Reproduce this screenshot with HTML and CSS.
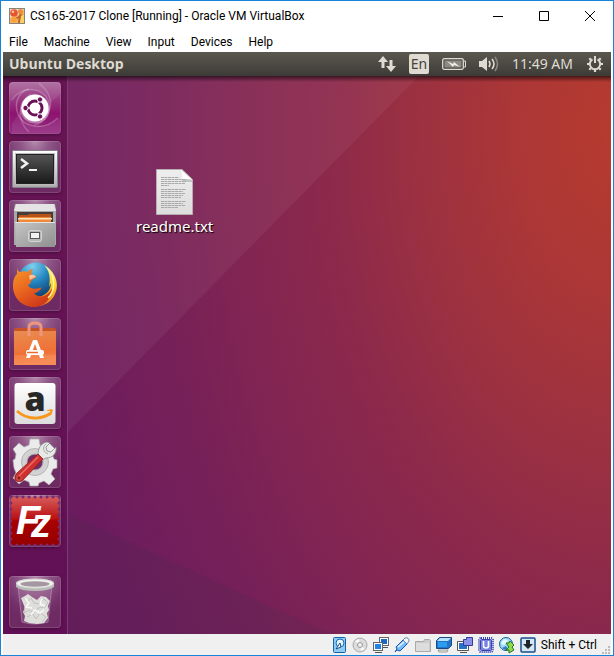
FILE: index.html
```html
<!DOCTYPE html>
<html lang="en">
<head>
<meta charset="utf-8">
<meta name="viewport" content="width=device-width, initial-scale=1">
<title>CS165-2017 Clone [Running] - Oracle VM VirtualBox</title>
<link rel="stylesheet" href="styles.css">
</head>
<body>
<div class="window">
  <header class="titlebar">
    <svg class="app-icon" viewBox="0 0 16 16" aria-hidden="true">
      <rect x=".5" y=".5" width="15" height="15" fill="#eadcc8" stroke="#8b8279"/>
      <path d="M1 10l8-3 6-6v9l-4 5H1z" fill="#f4b46a"/>
      <path d="M10 15c0-5 2-7 5-8M7 10c3 0 4-1 5-5" fill="none" stroke="#c0622a" stroke-width="2"/>
      <circle cx="5" cy="5" r="3.8" fill="#e4572e"/><circle cx="11.500" cy="3.500" r="2.500" fill="#f08a3c"/>
      <circle cx="5" cy="11.500" r="3" fill="#f9a13a"/><circle cx="4" cy="3.800" r="1.300" fill="#ffc0a0"/>
      <path d="M12 8l3-2v9h-4z" fill="#fbd25f"/>
    </svg>
    <h1 class="title">CS165-2017 Clone [Running] - Oracle VM VirtualBox</h1>
    <div class="controls">
      <button class="control" type="button" aria-label="Minimize"><svg viewBox="0 0 10 10"><path d="M0 5.500h10"/></svg></button>
      <button class="control" type="button" aria-label="Maximize"><svg viewBox="0 0 10 10"><path d="M.5.5h9v9h-9z"/></svg></button>
      <button class="control" type="button" aria-label="Close"><svg viewBox="0 0 10 10"><path d="M0 0l10 10M10 0L0 10"/></svg></button>
    </div>
  </header>
  <nav class="menubar" aria-label="Window menu">
    <button type="button">File</button><button type="button">Machine</button><button type="button">View</button><button type="button">Input</button><button type="button">Devices</button><button type="button">Help</button>
  </nav>
  <main class="guest">
    <div class="panel">
      <span class="panel-title">Ubuntu Desktop</span>
      <div class="indicators">
        <button type="button" aria-label="Network"><svg width="18" height="18" viewBox="0 0 18 18" fill="#dfdbd2"><path d="M5 1L0 7h3.500v6h3V7H10zM13 17l5-6h-3.500V5h-3v6H8z"/></svg></button>
        <button class="lang" type="button">En</button>
        <button type="button" aria-label="Battery"><svg width="24" height="12" viewBox="0 0 24 12"><rect x=".7" y=".7" width="20.600" height="10.600" rx="1.500" fill="none" stroke="#dfdbd2" stroke-width="1.300"/><path d="M22 3h1.500v6H22" fill="none" stroke="#dfdbd2"/><rect x="2.500" y="2.500" width="17" height="7" fill="#8c8a84"/><path d="M5 3l6 3 1-2 6 5-6-2-1 2z" fill="#f1eee5"/></svg></button>
        <button type="button" aria-label="Sound"><svg width="20" height="16" viewBox="0 0 20 16"><path d="M0 5h3l5-4v14l-5-4H0z" fill="#dfdbd2"/><path d="M10 5q2 3 0 6M13 3q4 5 0 10" fill="none" stroke="#dfdbd2" stroke-width="1.600"/><path d="M16 1q5 7 0 14" fill="none" stroke="#8a877f" stroke-width="1.600"/></svg></button>
        <button class="clock" type="button">11:49 AM</button>
        <button type="button" aria-label="Session"><svg width="18" height="18" viewBox="0 0 18 18" fill="none" stroke="#dfdbd2"><path d="M6.500 4.400a5.200 5.200 0 1 0 5 0" stroke-width="2"/><path d="M9 1v7" stroke-width="2"/><path d="M1 9h2M15 9h2M9 15v2M3.300 3.300l1.500 1.500M14.700 3.300l-1.500 1.500M3.300 14.700l1.500-1.500M14.700 14.700l-1.500-1.500" stroke-width="2.200"/></svg></button>
      </div>
    </div>
    <div class="desktop">
      <svg class="wallpaper" viewBox="0 0 608 558" preserveAspectRatio="none" aria-hidden="true">
        <path d="M65 0h351L65 356z" fill="#fff" fill-opacity=".05"/>
        <path d="M65 438l263 120H65z" fill="#303040" fill-opacity=".12"/>
      </svg>
      <nav class="launcher" aria-label="Launcher">
        <button class="tile dash" type="button" aria-label="Search your computer">
          <svg viewBox="0 0 52 52">
            <g fill="none" stroke="#fff"><path d="M3 18C12 4 32 4 39 18c5 12-3 23-14 25" stroke-opacity=".2" stroke-width="1.500"/><path d="M49 36C34 50 14 45 9 32 4 18 12 9 20 7" stroke-opacity=".25" stroke-width="1.500"/><path d="M20 50C7 38 9 20 22 12M30 1c14 12 15 24 5 34" stroke-opacity=".2" stroke-width="1.500"/></g>
            <path d="M1 20C14 2 35 5 40 22L51 12V1H1zM51 36C34 50 16 44 12 28L3 42v9h48z" fill="#fff" fill-opacity=".08"/>
            <circle cx="26" cy="27" r="14.500" fill="#ffffff66"/><circle cx="26" cy="26" r="13.500" fill="#fff"/>
            <circle cx="26" cy="26" r="7" fill="none" stroke="#6b1257" stroke-width="3"/>
            <path d="M26 26L12.500 26M26 26l6.500-11.500M26 26l6.500 11.500" stroke="#fff" stroke-width="1.300"/>
            <circle cx="26" cy="26" r="5.200" fill="#fff"/>
            <g fill="#6b1257" stroke="#fff"><circle cx="16.500" cy="26" r="2.700"/><circle cx="31" cy="17.500" r="2.700"/><circle cx="31" cy="34.500" r="2.700"/></g>
          </svg>
        </button>
        <button class="tile" type="button" aria-label="Terminal">
          <svg viewBox="0 0 52 52">
            <defs><linearGradient id="steel" x2="0" y2="1"><stop stop-color="#fff"/><stop offset="1" stop-color="#aaa"/></linearGradient><linearGradient id="screen" x2="0" y2="1"><stop stop-color="#555"/><stop offset="1" stop-color="#191919"/></linearGradient></defs>
            <rect x="3.500" y="9.500" width="45" height="37" rx="1" fill="url(#steel)" stroke="#85808a"/><rect x="6" y="12" width="40" height="32" fill="#bbb"/><rect x="7.500" y="13.500" width="37" height="29" fill="url(#screen)" stroke="#222"/>
            <path d="M12 18l6 4.500-6 4.500" fill="none" stroke="#f2f2f2" stroke-width="2.500"/><path d="M20 29h8" stroke="#f2f2f2" stroke-width="2"/>
          </svg>
        </button>
        <button class="tile" type="button" aria-label="Files">
          <svg viewBox="0 0 52 52">
            <defs><linearGradient id="drawer" x2="1" y2="1"><stop stop-color="#c6c6c6"/><stop offset="1" stop-color="#8f8f8f"/></linearGradient></defs>
            <path d="M6 4h40l1 6v35H5V10z" fill="#a8a8a8"/><path d="M7 4h38l2 7H5z" fill="#e4e4e4"/><path d="M8 12h36v11H8z" fill="#463c38"/>
            <path d="M10 15h9l1-1h22v9H9z" fill="#b95418"/><path d="M10 17h32v6H9z" fill="#ee8a3c"/><path d="M9 18h34v1.500H9z" fill="#ffe3bd"/>
            <path d="M6 22h40v25H7z" fill="url(#drawer)"/><path d="M6 22.500h40" stroke="#e4e4e4"/>
            <rect x="19.500" y="30.500" width="13" height="11" rx="2" fill="#b6b6b6" stroke="#d5d5d5"/><rect x="21.500" y="32.500" width="9" height="6" fill="#f1f1f1" stroke="#555"/>
          </svg>
        </button>
        <button class="tile" type="button" aria-label="Firefox">
          <svg viewBox="0 0 52 52">
            <defs><radialGradient id="globe" cx=".4" cy=".1" r=".9"><stop stop-color="#7dd0ef"/><stop offset=".5" stop-color="#2183bd"/><stop offset="1" stop-color="#123666"/></radialGradient><linearGradient id="fox" x1="0" y1="0" x2=".6" y2="1"><stop stop-color="#f49b2a"/><stop offset=".5" stop-color="#ec691f"/><stop offset="1" stop-color="#cf3a1b"/></linearGradient><linearGradient id="tail" x2="0" y2="1"><stop stop-color="#fff6a4"/><stop offset=".5" stop-color="#ffd223"/><stop offset="1" stop-color="#ed761e"/></linearGradient></defs>
            <circle cx="27" cy="22" r="18.500" fill="url(#globe)"/>
            <path d="M35 6c11 6 16 19 11 29-3 7-8 10-15 12l-8-9c13 1 19-6 19-14l-2 4C42 18 40 11 35 6z" fill="url(#tail)"/>
            <path d="M8 8c0 3 1 4 3 5 3-1 6-1 8 0 1-2 3-3 5-3-2 3-2 5-1 6 2 1 4 0 4 2-1 2-4 2-5 4 0 2-1 3-3 4 1 3 7 5 11 3 2-1 3 0 2 1-2 2-4 4-7 4 4 5 13 5 18-5 0 11-8 19-18 19C12 48 4 38 4 27 4 20 6 17 8 15z" fill="url(#fox)"/>
            <path d="M20 17c2-2 4-1 7 0-1 2-4 2-6 4z" fill="#f9c6a0"/><path d="M42 13c4 10 4 19-3 26" fill="none" stroke="#fff5a0" stroke-width="1.500"/>
          </svg>
        </button>
        <button class="tile" type="button" aria-label="Ubuntu Software">
          <svg viewBox="0 0 52 52">
            <defs><linearGradient id="bag" x2=".2" y2="1"><stop stop-color="#e88d50"/><stop offset=".7" stop-color="#ef7137"/><stop offset="1" stop-color="#f18552"/></linearGradient></defs>
            <path d="M5 11l2-1h38l2 1v3H5z" fill="#c75228"/><path d="M5 13h42v34H5z" fill="url(#bag)"/><path d="M5 37h42v10H5z" fill="#ff9a64" fill-opacity=".35"/>
            <path d="M20 18V9q0-4 6-4t6 4v9" fill="none" stroke="#ed967d" stroke-width="3"/>
            <path d="M24 22h4l7 18h-4l-5-14-5 14h-4z" fill="#fff"/><rect x="17" y="32" width="18" height="5" rx="2" fill="#fff"/><path d="M18 34.500h11" stroke="#ee6c30" stroke-width="1.500"/>
          </svg>
        </button>
        <button class="tile" type="button" aria-label="Amazon">
          <svg viewBox="0 0 52 52">
            <defs><linearGradient id="card" x2="0" y2="1"><stop stop-color="#fff"/><stop offset="1" stop-color="#dcdcdc"/></linearGradient></defs>
            <rect x="5.500" y="6" width="41" height="41" rx="3" fill="url(#card)"/>
            <text class="amazon-a" x="26" y="34" text-anchor="middle">a</text>
            <path d="M8 34c10 9 24 9 34 2" fill="none" stroke="#f7981d" stroke-width="2.800"/><path d="M37 34q5-3 7-1-1 4-3 6 1-4 0-5z" fill="#f7981d"/>
          </svg>
        </button>
        <button class="tile" type="button" aria-label="System Settings">
          <svg viewBox="0 0 52 52">
            <path d="M21 3h9l1 6 4 2 5-4 6 6-3 5 2 5 3 1v8l-4 1-2 5 4 5-6 6-5-4-5 2-1 3h-8l-1-4-5-2-5 4-6-6 3-5-2-5-1-8 2-1 1-5-3-5 6-6 5 4 5-2z" fill="#ebebeb" stroke="#aaa" stroke-width=".7"/>
            <circle cx="26" cy="26" r="13.500" fill="#d2d2d2" stroke="#b6b6b6"/><circle cx="26" cy="26" r="8" fill="#742b67" stroke="#aaa"/>
            <path d="M29 19c0-7 3-12 9-13l3 1-4 4 1 4 4 1 5-5c1 6-3 11-10 11l-4 2z" fill="#e7e9e6" stroke="#888" stroke-width=".8"/><path d="M37 8c-4 3-3 8 2 10" fill="none" stroke="#aaa"/>
            <path d="M29 18l5 5-21 22q-4 2-7-1-1-4 2-7z" fill="#ce3030" stroke="#861d21" stroke-width=".8"/><path d="M29 21L9 41" stroke="#ee6c66" stroke-width="1.500"/><circle cx="10" cy="42" r="2.200" fill="#872024" stroke="#e25850"/>
          </svg>
        </button>
        <button class="tile" type="button" aria-label="FileZilla">
          <svg viewBox="0 0 52 52">
            <defs><linearGradient id="stamp" x2="0" y2="1"><stop stop-color="#d75b5b"/><stop offset=".45" stop-color="#ba1212"/><stop offset=".5" stop-color="#a80000"/><stop offset="1" stop-color="#970000"/></linearGradient></defs>
            <rect x="2" y="2" width="48" height="48" fill="url(#stamp)"/><rect x="2" y="2" width="48" height="48" fill="none" stroke="#7b2c69" stroke-width="3" stroke-linecap="round" stroke-dasharray="0 6"/>
            <text class="fz" x="7" y="39"><tspan class="fz-f">F</tspan><tspan class="fz-z" x="22" y="42">z</tspan></text>
          </svg>
        </button>
        <button class="tile trash" type="button" aria-label="Trash">
          <svg viewBox="0 0 52 52">
            <path d="M9 10l4 36q13 4 26 0l4-36z" fill="#d7bed2" fill-opacity=".2" stroke="#c8aac2" stroke-opacity=".5"/>
            <path d="M12 22l4-2 3-2 4 3 5 3 4-4 5 1 4 4-2 5 1 4-2 3 1 5-4 5-7 1-8-1-5-2 1-5-2-4 2-4z" fill="#dededb"/>
            <path d="M14 22l5 3 3-3 3 5 5 1 5-5 4 4-3 4-7 1-4 5-5-3-5 3 1-7M18 41l6-3 3 5 4-6 6 4-4 5" fill="none" stroke="#c2c1be"/><path d="M16 22l4 5-3 4 6 1M33 23l-2 5 5 2M22 39l4-5 5 3 4-3" fill="none" stroke="#fafafa" stroke-width="1.500"/>
            <path d="M7 7q0-4 19-4t19 4v4q-5 4-19 4T7 11z" fill="#b9bbb7"/><ellipse cx="26" cy="7.500" rx="18.500" ry="4.500" fill="#f2f2ef" stroke="#d5d7d3"/><ellipse cx="26" cy="8" rx="14.500" ry="2.700" fill="#a597a1"/>
          </svg>
        </button>
      </nav>
      <section class="icons">
        <button class="file" type="button">
          <svg width="37" height="46" viewBox="0 0 37 46" aria-hidden="true">
            <defs><linearGradient id="page" x2="0" y2="1"><stop stop-color="#eee"/><stop offset="1" stop-color="#ddd"/></linearGradient></defs>
            <path d="M.5.5H26l10.500 10v35H.5z" fill="url(#page)" stroke="#b5aead"/><path d="M25 1l11 10q-6-2-10 0 1-5-1-10z" fill="#fff"/><path d="M26 11q4-2 10 0v2H26z" fill="#c4c4c4"/>
            <path d="M5 8.500h18M5 10.500h25M5 12.500h25M5 14.500h24M5 16.500h8M5 20.500h25M5 22.500h22M5 24.500h24M5 26.500h22M5 28.500h20M5 32.500h25M5 34.500h22M5 36.500h24M5 38.500h17" stroke="#a9a9a9" stroke-dasharray="3 .5"/>
          </svg>
          <span>readme.txt</span>
        </button>
      </section>
    </div>
  </main>
  <footer class="statusbar">
    <button type="button" aria-label="Hard disks"><svg viewBox="0 0 16 16"><rect x="2.500" y=".5" width="12" height="15" rx="1" fill="#8fcaf2" stroke="#1264aa"/><circle cx="9" cy="6" r="4" fill="#e2f4ff" stroke="#176cae"/><path d="M9 6l-4 6 5-2z" fill="#fff" stroke="#174f8e"/></svg></button>
    <button type="button" aria-label="Optical drives"><svg viewBox="0 0 16 16"><circle cx="8" cy="8" r="7" fill="#dcdcdc" stroke="#aaa"/><path d="M8 8L3 4l4-2zM8 8l5 4-4 2z" fill="#fafafa"/><circle cx="8" cy="8" r="2.500" fill="#eee" stroke="#999"/></svg></button>
    <button type="button" aria-label="Network"><svg viewBox="0 0 16 16"><rect x="6.500" y=".5" width="9" height="8" fill="#fff" stroke="#666"/><rect x="8" y="2" width="6" height="5" fill="#1767ca"/><path d="M10 10.500h5" stroke="#555"/><rect x=".5" y="5.500" width="9" height="8" fill="#fff" stroke="#666"/><rect x="2" y="7" width="6" height="5" fill="#2383e4"/><path d="M2 15.500h7" stroke="#555"/></svg></button>
    <button type="button" aria-label="USB"><svg viewBox="0 0 16 16"><path d="M1 15l2-3-1-2 7-7 4 4-7 7-3-1z" fill="#77bcfa" stroke="#1454ae"/><path d="M9 3l2-2q4-1 4 3l-2 3z" fill="#f5f5f5" stroke="#6384ad"/><path d="M4 10l6-5" stroke="#e2f3ff" stroke-width="1.500"/></svg></button>
    <button type="button" aria-label="Shared folders"><svg viewBox="0 0 16 16"><path d="M.5 4.500h8l1-2h5l1 1v11H.5z" fill="#ccc" stroke="#aaa"/><path d="M1 6h13v8H1z" fill="#ddd"/></svg></button>
    <button type="button" aria-label="Display"><svg viewBox="0 0 16 16"><path d="M.5 3.500l3-3h12v8l-3 3H.5z" fill="#2374c9" stroke="#1b4b83"/><path d="M1 4l3-3h11l-3 3z" fill="#b7e2ff"/><path d="M2 5h9v5H2z" fill="#2c9cf3"/><path d="M2 13h10l-1 2H3z" fill="#eee" stroke="#666" stroke-width=".6"/></svg></button>
    <button type="button" aria-label="Recording"><svg viewBox="0 0 16 16"><path d="M.5 4.500h11v9H.5z" fill="#fff" stroke="#555"/><path d="M2 6h8v6H2z" fill="#2474cc"/><path d="M3 15.500h7" stroke="#555"/><path d="M6.500 2.500h3v-2h6v8h-9z" fill="#8a91e5" stroke="#3539a0"/></svg></button>
    <button type="button" aria-label="Virtualization"><svg viewBox="0 0 16 16"><rect x="1" y="1" width="14" height="14" rx="2" fill="none" stroke="#3942b4" stroke-width="2" stroke-dasharray="1 1"/><rect x="2.500" y="2.500" width="11" height="11" rx="1" fill="#7883df" stroke="#3942b4"/><path d="M5.500 4v5q0 2 2.500 2t2.500-2V4" fill="none" stroke="#fff" stroke-width="1.600"/></svg></button>
    <button type="button" aria-label="Mouse integration"><svg viewBox="0 0 16 16"><circle cx="7" cy="7" r="6.500" fill="#9fdcf8" stroke="#1c6094"/><path d="M2 6l3-4 4 1-2 4-3 1z" fill="#e4f8ff"/><path d="M3 11l4-2 2 3-3 1z" fill="#357ec1"/><path d="M7 6h3l1-2 4 4-2 2 2 3-5 3v-3H7l3-3z" fill="#8edb4b" stroke="#277326"/></svg></button>
    <button type="button" aria-label="Keyboard capture"><svg viewBox="0 0 16 16"><rect x="1" y="1" width="14" height="14" rx="1" fill="#d4e7f4" stroke="#174f88" stroke-width="1.500"/><path d="M6 3h4v4h3l-5 5-5-5h3z" fill="#20252c"/></svg></button>
    <span class="host-key">Shift + Ctrl</span>
    <svg class="grip" viewBox="0 0 9 9" aria-hidden="true"><path d="M6 0h2v2H6zM3 3h2v2H3zM6 3h2v2H6zM0 6h2v2H0zM3 6h2v2H3zM6 6h2v2H6z" fill="#bcbcbc"/></svg>
  </footer>
</div>
</body>
</html>
```

FILE: styles.css
```css
* { box-sizing: border-box; }
body { margin: 0; font-family: Roboto, "Open Sans", sans-serif; font-size: 12px; color: #000; }
button { margin: 0; padding: 0; border: 0; background: none; color: inherit; font: inherit; display: flex; align-items: center; justify-content: center; }
svg { display: block; overflow: visible; }

.window { min-height: 100vh; display: flex; flex-direction: column; border: 1px solid #1883d7; background: #fff; }
.titlebar { height: 30px; display: flex; align-items: center; padding-left: 8px; }
.app-icon { width: 16px; height: 16px; margin-right: 5px; }
.title { margin: 0; flex: 1; min-width: 0; white-space: nowrap; font-size: 12px; line-height: 16px; font-weight: 400; }
.controls { display: flex; }
.control { width: 46px; height: 30px; }
.control svg { width: 10px; height: 10px; fill: none; stroke: #000; }
.menubar { height: 21px; display: flex; align-items: center; gap: 16px; padding-left: 8px; }

.guest { flex: 1; display: flex; flex-direction: column; margin: 0 2px; }
.panel { height: 24px; display: flex; align-items: center; justify-content: space-between; padding: 0 7px 0 6px; background: linear-gradient(#5b584f, #3d3b37); color: #dfdbd2; font-family: "Noto Sans", sans-serif; font-size: 14px; line-height: 20px; }
.panel-title { font-family: "Open Sans", sans-serif; font-weight: 700; }
.indicators { display: flex; align-items: center; gap: 13px; }
.lang { width: 20px; height: 20px; border-radius: 2px; background: #dfdbd2; color: #44423d; }

.desktop { flex: 1; position: relative; display: flex; background: radial-gradient(ellipse 115% 200% at 101% 10%, #b63b2e 0, #ac3736 14%, #9c3140 28%, #8e2a4a 40%, #822552 54%, #752059 68%, #6c1c5e 82%, #671c5e 100%); }
.desktop::after { content: ""; position: absolute; inset: 0 0 auto; height: 6px; background: linear-gradient(#0009, #0000); }
.wallpaper { position: absolute; inset: 0; width: 100%; height: 100%; }
.launcher { position: relative; width: 65px; display: flex; flex-direction: column; gap: 7px; padding: 6px; border-right: 1px solid #7c3c74; background: linear-gradient(#681553, #621056); }
.tile { width: 52px; height: 52px; border-radius: 4px; background: radial-gradient(ellipse 80% 80% at 50% 0, #b48bac 0, #8f5687 35%, #74316a 80%, #6e2a63 100%); box-shadow: inset 0 0 0 1px #ffffff22, 0 1px 3px #2a082580; }
.tile svg { width: 52px; height: 52px; }
.dash { background: linear-gradient(#a9679b, #8d136e 60%, #922c80); }
.trash { margin-top: auto; }
.amazon-a { font: 800 34px "Open Sans", sans-serif; fill: #282828; }
.fz { font-family: "Liberation Sans", sans-serif; font-style: italic; font-weight: 700; fill: #fff; }
.fz-f { font-size: 40px; }
.fz-z { font-size: 40px; }

.icons { position: relative; flex: 1; display: flex; align-items: flex-start; padding: 93px 0 0 68px; }
.file { flex-direction: column; gap: 1px; color: #fff; font: 15px/20px "Noto Sans", sans-serif; text-shadow: 1px 1px 1px #000; }

.statusbar { height: 21px; display: flex; align-items: center; justify-content: flex-end; gap: 5px; margin: 0 2px; background: #f0f0f0; }
.statusbar button svg { width: 16px; height: 16px; }
.host-key { white-space: nowrap; line-height: 16px; }
.grip { width: 9px; height: 9px; align-self: flex-end; }
```
